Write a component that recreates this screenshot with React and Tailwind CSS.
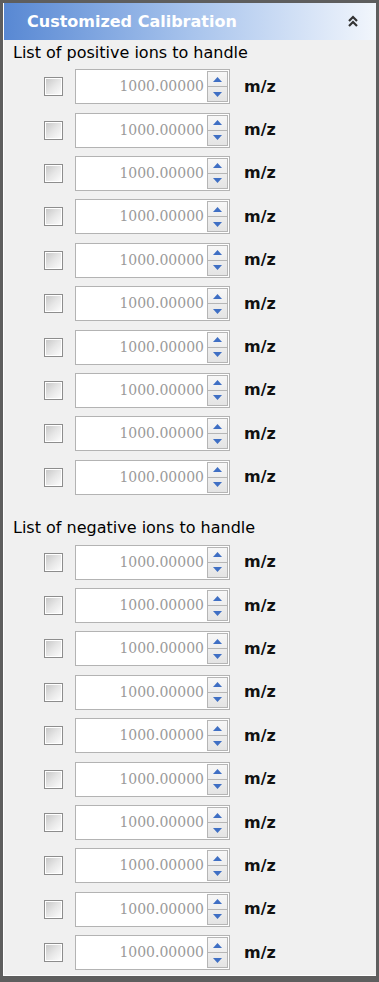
import React from 'react';

const Spinner = () => (
    <div className="flex flex-col w-[21px] h-[31px] border border-[#b5b5b5] bg-gradient-to-b from-[#f7f7f7] to-[#e4e4e4]">
        <div className="flex-1 flex items-center justify-center border-b border-[#b5b5b5]">
            <svg width="9" height="5" viewBox="0 0 9 5"><path d="M0 5 L4.5 0 L9 5 Z" fill="#3f6fc4" /></svg>
        </div>
        <div className="flex-1 flex items-center justify-center">
            <svg width="9" height="5" viewBox="0 0 9 5"><path d="M0 0 L4.5 5 L9 0 Z" fill="#3f6fc4" /></svg>
        </div>
    </div>
);

const IonRow = () => (
    <div className="h-[43.4px] flex items-center">
        <div className="ml-[40px] w-[19px] h-[19px] border border-[#8d8d8d] p-[1px] bg-white">
            <div className="w-full h-full bg-gradient-to-br from-[#c9c9c9] via-[#e6e6e6] to-[#fbfbfb]" />
        </div>
        <div className="ml-[12px] w-[155px] h-[35px] border border-[#b3b3b3] bg-white flex items-center pr-[1px]">
            <span className="flex-1 text-right pr-[3px] text-[14px] text-[#9a9a9a]" style={{ fontFamily: '"DejaVu Serif", serif' }}>
                1000.00000
            </span>
            <Spinner />
        </div>
        <span className="ml-[14px] text-[16px] font-bold text-[#111]" style={{ fontFamily: '"DejaVu Sans", sans-serif' }}>m/z</span>
    </div>
);

const Section = ({ title, first }) => (
    <div>
        <div className={`${first ? 'h-[25px]' : 'h-[41.6px] pt-[17px]'} pl-[9px] flex items-center text-[16px] text-black`}
            style={{ fontFamily: '"DejaVu Sans", sans-serif' }}>
            {title}
        </div>
        {Array.from({ length: 10 }).map((_, i) => <IonRow key={i} />)}
    </div>
);

export default function App() {
    return (
        <div className="w-[379px] h-[982px] bg-[#5e5e5e] pl-[3px] pt-[3px] pr-[3px] pb-[6px]">
            <div className="h-full flex flex-col bg-[#f0f0f0] border-b border-l border-white">
                <div className="h-[37px] flex items-center justify-between pl-[23px] pr-[17px] bg-gradient-to-r from-[#5888d3] via-[#a7c3ec] to-[#f2f6fc]">
                    <span className="text-white font-bold text-[16px]" style={{ fontFamily: '"DejaVu Sans", sans-serif' }}>
                        Customized Calibration
                    </span>
                    <svg width="12" height="13" viewBox="0 0 12 13">
                        <path d="M2 6 L6 2 L10 6" stroke="#333" strokeWidth="2.2" fill="none" />
                        <path d="M2 11 L6 7 L10 11" stroke="#333" strokeWidth="2.2" fill="none" />
                    </svg>
                </div>
                <Section title="List of positive ions to handle" first />
                <Section title="List of negative ions to handle" />
            </div>
        </div>
    );
}
